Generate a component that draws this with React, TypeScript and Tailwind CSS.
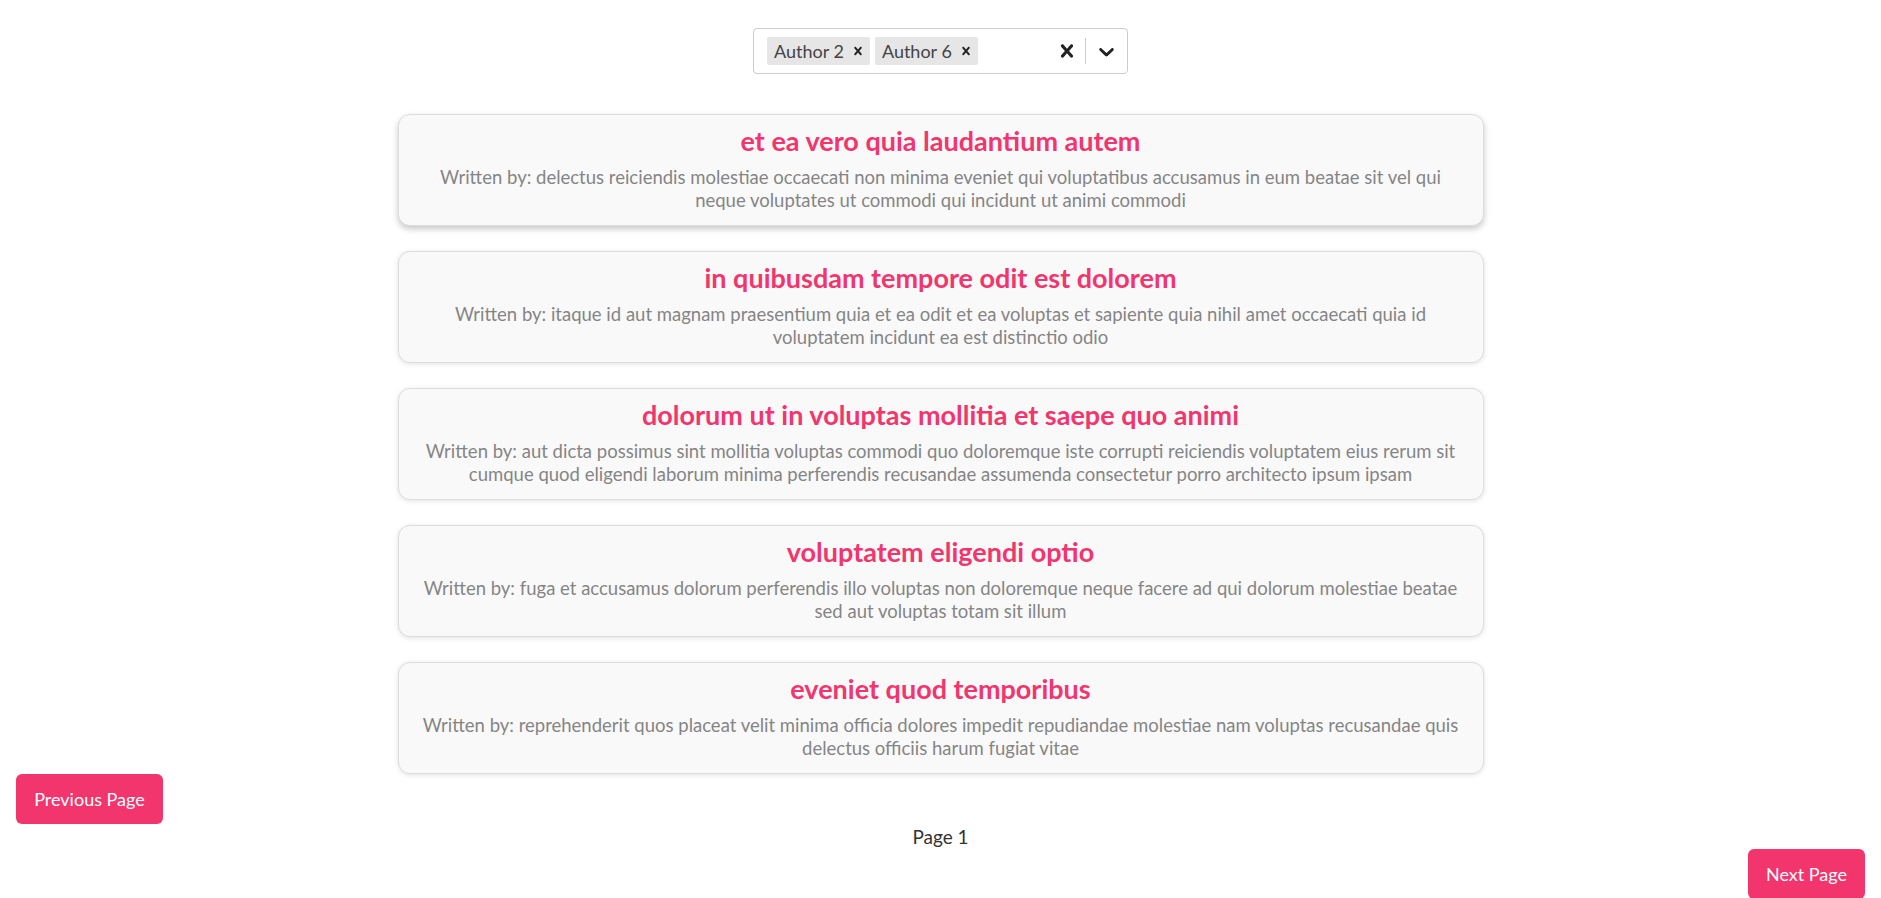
import React from "react";

const posts = [
  {
    title: "et ea vero quia laudantium autem",
    author:
      "delectus reiciendis molestiae occaecati non minima eveniet qui voluptatibus accusamus in eum beatae sit vel qui neque voluptates ut commodi qui incidunt ut animi commodi",
  },
  {
    title: "in quibusdam tempore odit est dolorem",
    author:
      "itaque id aut magnam praesentium quia et ea odit et ea voluptas et sapiente quia nihil amet occaecati quia id voluptatem incidunt ea est distinctio odio",
  },
  {
    title: "dolorum ut in voluptas mollitia et saepe quo animi",
    author:
      "aut dicta possimus sint mollitia voluptas commodi quo doloremque iste corrupti reiciendis voluptatem eius rerum sit cumque quod eligendi laborum minima perferendis recusandae assumenda consectetur porro architecto ipsum ipsam",
  },
  {
    title: "voluptatem eligendi optio",
    author:
      "fuga et accusamus dolorum perferendis illo voluptas non doloremque neque facere ad qui dolorum molestiae beatae sed aut voluptas totam sit illum",
  },
  {
    title: "eveniet quod temporibus",
    author:
      "reprehenderit quos placeat velit minima officia dolores impedit repudiandae molestiae nam voluptas recusandae quis delectus officiis harum fugiat vitae",
  },
];

const crossPath =
  "M14.348 14.849c-0.469 0.469-1.229 0.469-1.697 0l-2.651-3.030-2.651 3.029c-0.469 0.469-1.229 0.469-1.697 0-0.469-0.469-0.469-1.229 0-1.697l2.758-3.15-2.759-3.152c-0.469-0.469-0.469-1.228 0-1.697s1.228-0.469 1.697 0l2.652 3.031 2.651-3.031c0.469-0.469 1.228-0.469 1.697 0s0.469 1.229 0 1.697l-2.758 3.152 2.758 3.15c0.469 0.469 0.469 1.229 0 1.698z";

const Chip = ({ label }: { label: string }) => (
  <div className="flex items-center h-[28px] bg-[#e6e6e6] rounded-[2px] mr-[5px]">
    <span className="pl-[7px] pr-[2px] text-[18px] text-[#444]">{label}</span>
    <span className="px-[4px] h-full flex items-center text-[#222]">
      <svg width="16" height="16" viewBox="0 0 20 20" fill="currentColor">
        <path d={crossPath} />
      </svg>
    </span>
  </div>
);

const App = () => {
  return (
    <div
      className="min-h-screen w-full bg-white flex flex-col"
      style={{ fontFamily: "Lato, 'Noto Sans', sans-serif" }}
    >
      {/* author filter */}
      <div className="flex justify-center mt-[28px]">
        <div className="w-[375px] h-[46px] border border-[#cccccc] rounded-[4px] flex items-center bg-white">
          <div className="flex-1 flex items-center pl-[13px]">
            <Chip label="Author 2" />
            <Chip label="Author 6" />
          </div>
          <div className="flex items-center h-full">
            <span className="px-[5px] text-[#222] flex items-center">
              <svg width="26" height="26" viewBox="0 0 20 20" fill="currentColor">
                <path d={crossPath} />
              </svg>
            </span>
            <span className="w-px h-[26px] bg-[#cccccc]" />
            <span className="px-[8px] text-[#222] flex items-center">
              <svg width="25" height="25" viewBox="0 0 20 20" fill="currentColor">
                <path d="M4.516 7.548c0.436-0.446 1.043-0.481 1.576 0l3.908 3.747 3.908-3.747c0.533-0.481 1.141-0.446 1.574 0 0.436 0.445 0.408 1.197 0 1.615-0.406 0.418-4.695 4.502-4.695 4.502-0.217 0.223-0.502 0.335-0.787 0.335s-0.57-0.112-0.789-0.335c0 0-4.287-4.084-4.695-4.502s-0.436-1.17 0-1.615z" />
              </svg>
            </span>
          </div>
        </div>
      </div>

      {/* posts */}
      <div className="flex flex-col items-center gap-[25px] mt-[40px]">
        {posts.map((p, i) => (
          <div
            key={p.title}
            className={
              i === 0
                ? "w-[1086px] bg-[#f9f9f9] border border-[#dddddd] rounded-[12px] px-[22px] pt-[9px] pb-[13px] text-center shadow-[0_3px_6px_rgba(0,0,0,0.22)]"
                : "w-[1086px] bg-[#f9f9f9] border border-[#dddddd] rounded-[12px] px-[22px] pt-[9px] pb-[13px] text-center shadow-[0_1px_5px_rgba(0,0,0,0.12)]"
            }
          >
            <h2 className="text-[27px] leading-[34px] font-bold text-[#f2356d]">
              {p.title}
            </h2>
            <p className="mt-[8px] text-[18.5px] leading-[23px] text-[#858585]">
              {`Written by: ${p.author}`}
            </p>
          </div>
        ))}
      </div>

      {/* pagination */}
      <div className="flex flex-col">
        <button className="self-start ml-[16px] w-[147px] h-[50px] bg-[#f2356d] text-white text-[18px] rounded-[6px]">
          Previous Page
        </button>
        <p className="text-center text-[19px] leading-[24px] text-[#333] mt-[1px]">
          Page 1
        </p>
        <button className="self-end mr-[16px] w-[117px] h-[50px] bg-[#f2356d] text-white text-[18px] rounded-[6px]">
          Next Page
        </button>
      </div>
    </div>
  );
};

export default App;
